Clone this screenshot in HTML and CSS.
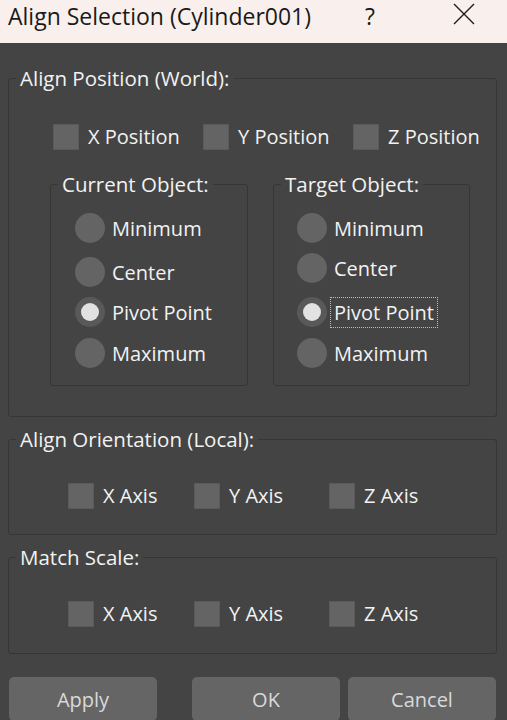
FILE: index.html
```html
<!DOCTYPE html>
<html lang="en">
<head>
  <meta charset="UTF-8" />
  <title>Align Selection</title>
  <link rel="stylesheet" href="styles.css">
</head>
<body>

  <!-- window caption -->
  <div class="titlebar">
    <span class="title">Align Selection (Cylinder001)</span>
    <span class="help">?</span>
    <svg class="close" width="22" height="22" viewBox="0 0 22 22">
      <path d="M1 1 L21 21 M21 1 L1 21" stroke="#1c1c1c" stroke-width="1.4" fill="none"/>
    </svg>
  </div>

  <main class="dialog">

    <!-- Align Position -->
    <fieldset class="group">
      <legend>Align Position (World):</legend>
      <div class="checks checks-position">
        <label class="check"><span class="box"></span>X Position</label>
        <label class="check"><span class="box"></span>Y Position</label>
        <label class="check"><span class="box"></span>Z Position</label>
      </div>

      <div class="objects">
        <fieldset class="subgroup">
          <legend>Current Object:</legend>
          <div class="radios">
            <label class="radio"><span class="dot"></span>Minimum</label>
            <label class="radio gap-lg"><span class="dot"></span>Center</label>
            <label class="radio"><span class="dot on"></span>Pivot Point</label>
            <label class="radio gap-md"><span class="dot"></span>Maximum</label>
          </div>
        </fieldset>

        <fieldset class="subgroup subgroup-target">
          <legend>Target Object:</legend>
          <div class="radios">
            <label class="radio"><span class="dot"></span>Minimum</label>
            <label class="radio"><span class="dot"></span>Center</label>
            <label class="radio gap-lg"><span class="dot on"></span><span class="focused">Pivot Point</span></label>
            <label class="radio gap-md"><span class="dot"></span>Maximum</label>
          </div>
        </fieldset>
      </div>
    </fieldset>

    <!-- Align Orientation -->
    <fieldset class="group group-small">
      <legend>Align Orientation (Local):</legend>
      <div class="checks checks-axis">
        <label class="check"><span class="box"></span>X Axis</label>
        <label class="check"><span class="box"></span>Y Axis</label>
        <label class="check"><span class="box"></span>Z Axis</label>
      </div>
    </fieldset>

    <!-- Match Scale -->
    <fieldset class="group group-small group-scale">
      <legend>Match Scale:</legend>
      <div class="checks checks-axis">
        <label class="check"><span class="box"></span>X Axis</label>
        <label class="check"><span class="box"></span>Y Axis</label>
        <label class="check"><span class="box"></span>Z Axis</label>
      </div>
    </fieldset>

    <div class="buttons">
      <button class="btn btn-apply">Apply</button>
      <button class="btn">OK</button>
      <button class="btn">Cancel</button>
    </div>

  </main>

</body>
</html>
```

FILE: styles.css
```css
body {
  margin: 0;
  background-color: #444444;
  font-family: 'Open Sans', 'Noto Sans', sans-serif;
  color: #f2f2f2;
  overflow: hidden;
}

/* caption bar */
.titlebar {
  display: flex;
  align-items: flex-start;
  height: 43px;
  padding: 0 32px 0 8px;
  background-color: #f9f0ee;
  color: #1a1a1a;
  font-size: 23px;
  line-height: 32px;
}

.title {
  flex: 1;
}

.help {
  width: 20px;
  margin-right: 73px;
  text-align: center;
}

.close {
  margin-top: 3px;
}

/* dialog body */
.dialog {
  padding: 23px 10px 0 8px;
  font-size: 20px;
}

fieldset {
  margin: 0;
  padding: 0;
  min-width: 0;
  border: 1px solid #363636;
  border-radius: 3px;
}

legend {
  margin-left: 7px;
  padding: 0 4px;
  font-size: 20.5px;
  line-height: 24px;
}

.group {
  padding-bottom: 30px;
}

.group-small {
  margin-top: 10px;
  padding-bottom: 26px;
}

.group-scale {
  padding-bottom: 27px;
}

/* checkboxes */
.checks {
  display: grid;
  height: 26px;
}

.checks-position {
  margin: 33px 0 0 44px;
  grid-template-columns: 150px 150px auto;
}

.checks-axis {
  margin: 31px 0 0 59px;
  grid-template-columns: 126px 135px auto;
}

.check {
  display: flex;
  align-items: center;
  gap: 9px;
  white-space: nowrap;
}

.box {
  width: 24px;
  height: 24px;
  background-color: #646464;
  border: 1px solid #5a5a5a;
}

/* current / target object */
.objects {
  display: flex;
  gap: 25px;
  margin: 23px 0 0 41px;
}

.subgroup {
  width: 198px;
  box-sizing: border-box;
  padding: 17px 0;
}

.subgroup-target {
  width: 197px;
}

.radios {
  display: flex;
  flex-direction: column;
  gap: 10px;
  padding-left: 24px;
}

.subgroup-target .radios {
  padding-left: 23px;
}

.radio {
  display: flex;
  align-items: center;
  gap: 7px;
  height: 30px;
  white-space: nowrap;
}

.gap-lg {
  margin-top: 4px;
}

.gap-md {
  margin-top: 1px;
}

.dot {
  width: 30px;
  height: 30px;
  border-radius: 50%;
  background-color: #646464;
  display: flex;
  align-items: center;
  justify-content: center;
}

.dot.on {
  background-color: #595959;
}

.dot.on::after {
  content: "";
  width: 18px;
  height: 18px;
  border-radius: 50%;
  background-color: #e2e2e2;
}

.focused {
  outline: 1px dotted #bdbdbd;
  outline-offset: 1px;
  margin-left: -2px;
  padding: 0 2px;
}

/* bottom buttons */
.buttons {
  display: flex;
  gap: 8px;
  margin-top: 23px;
  padding-left: 1px;
}

.btn {
  width: 148px;
  height: 44px;
  border: none;
  border-radius: 5px;
  background-color: #656565;
  color: #d9d9d9;
  font-family: inherit;
  font-size: 20px;
  padding: 0;
}

.btn-apply {
  margin-right: 27px;
}
```
